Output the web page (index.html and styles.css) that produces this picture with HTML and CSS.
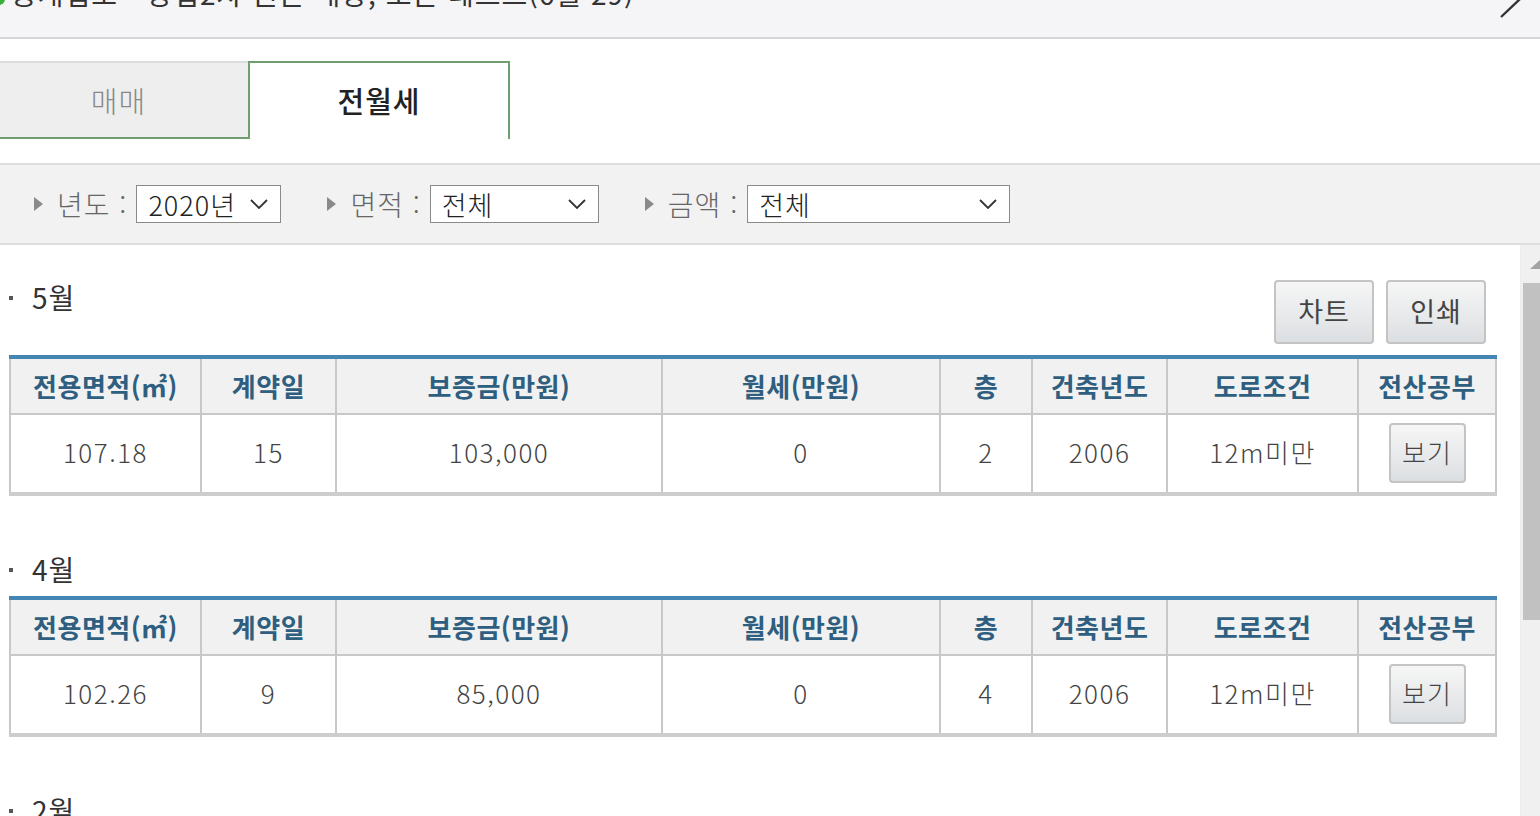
FILE: index.html
```html
<!DOCTYPE html>
<html lang="ko">
<head>
<meta charset="utf-8">
<title>실거래가</title>
<link rel="stylesheet" href="styles.css">
</head>
<body>
<div class="page">
  <header class="titlebar">
    <span class="title-dot"></span>
    <h1 class="title">중개업소 - 상업2차 원본 매장, 오픈 테스트(6월 29)</h1>
    <svg class="close" width="30" height="18" viewBox="0 0 30 18"><line x1="1" y1="17" x2="20" y2="-1" stroke="#333" stroke-width="2.4"/></svg>
  </header>

  <nav class="tabs">
    <div class="tab">매매</div>
    <div class="tab tab-active">전월세</div>
  </nav>

  <div class="filters">
    <div class="filter">
      <span class="tri"></span>
      <span class="flabel">년도 :</span>
      <div class="select sel-year"><span>2020년</span><svg class="chev" width="18" height="10" viewBox="0 0 18 10"><polyline points="1,1 9,9 17,1" fill="none" stroke="#333" stroke-width="1.8"/></svg></div>
    </div>
    <div class="filter">
      <span class="tri"></span>
      <span class="flabel">면적 :</span>
      <div class="select sel-area"><span>전체</span><svg class="chev" width="18" height="10" viewBox="0 0 18 10"><polyline points="1,1 9,9 17,1" fill="none" stroke="#333" stroke-width="1.8"/></svg></div>
    </div>
    <div class="filter">
      <span class="tri"></span>
      <span class="flabel">금액 :</span>
      <div class="select sel-price"><span>전체</span><svg class="chev" width="18" height="10" viewBox="0 0 18 10"><polyline points="1,1 9,9 17,1" fill="none" stroke="#333" stroke-width="1.8"/></svg></div>
    </div>
  </div>

  <div class="main">
    <div class="content">
      <section class="month">
        <div class="month-head">
          <h2 class="month-title"><span class="bullet"></span>5월</h2>
          <div class="actions">
            <button class="btn btn-lg">차트</button>
            <button class="btn btn-lg">인쇄</button>
          </div>
        </div>
        <table class="deals">
          <colgroup>
            <col class="c1"><col class="c2"><col class="c3"><col class="c4"><col class="c5"><col class="c6"><col class="c7"><col class="c8">
          </colgroup>
          <thead>
            <tr><th>전용면적(㎡)</th><th>계약일</th><th>보증금(만원)</th><th>월세(만원)</th><th>층</th><th>건축년도</th><th>도로조건</th><th>전산공부</th></tr>
          </thead>
          <tbody>
            <tr><td>107.18</td><td>15</td><td>103,000</td><td>0</td><td>2</td><td>2006</td><td>12m미만</td><td><button class="btn btn-sm">보기</button></td></tr>
          </tbody>
        </table>
      </section>

      <section class="month">
        <div class="month-head">
          <h2 class="month-title"><span class="bullet"></span>4월</h2>
        </div>
        <table class="deals">
          <colgroup>
            <col class="c1"><col class="c2"><col class="c3"><col class="c4"><col class="c5"><col class="c6"><col class="c7"><col class="c8">
          </colgroup>
          <thead>
            <tr><th>전용면적(㎡)</th><th>계약일</th><th>보증금(만원)</th><th>월세(만원)</th><th>층</th><th>건축년도</th><th>도로조건</th><th>전산공부</th></tr>
          </thead>
          <tbody>
            <tr><td>102.26</td><td>9</td><td>85,000</td><td>0</td><td>4</td><td>2006</td><td>12m미만</td><td><button class="btn btn-sm">보기</button></td></tr>
          </tbody>
        </table>
      </section>

      <section class="month">
        <div class="month-head">
          <h2 class="month-title"><span class="bullet"></span>2월</h2>
        </div>
      </section>
    </div>
    <div class="scrollbar">
      <span class="sb-arrow"></span>
      <span class="sb-thumb"></span>
    </div>
  </div>
</div>
</body>
</html>
```

FILE: styles.css
```css
* { box-sizing: border-box; }
html, body {
  margin: 0;
  padding: 0;
  width: 1540px;
  height: 816px;
  overflow: hidden;
  background: #fff;
  font-family: "Noto Sans CJK KR", "Noto Sans", sans-serif;
  color: #333;
}
.page {
  display: flex;
  flex-direction: column;
  height: 816px;
}

/* title bar */
.titlebar {
  position: relative;
  height: 39px;
  flex: none;
  background: #f5f5f7;
  border-bottom: 2px solid #d6d6d6;
  display: flex;
  align-items: flex-start;
  overflow: hidden;
}
.title-dot {
  flex: none;
  width: 12px;
  height: 12px;
  border-radius: 50%;
  background: #3cae3c;
  margin: -7px 0 0 -7px;
}
.title {
  margin: -21px 0 0 6px;
  font-size: 28px;
  line-height: 28px;
  font-weight: 400;
  color: #333;
  white-space: nowrap;
  letter-spacing: 1px;
}
.close {
  position: absolute;
  right: 10px;
  top: 0;
}

/* tabs */
.tabs {
  flex: none;
  display: flex;
  margin-top: 22px;
  height: 78px;
}
.tab {
  width: 248px;
  display: flex;
  align-items: center;
  justify-content: center;
  font-size: 29px;
  font-weight: 300;
  letter-spacing: 1px;
  color: #888;
  background: #eeeeee;
  border-top: 2px solid #dcdcdc;
  border-bottom: 2px solid #6f9f6f;
  padding: 0 11px 0 0;
}
.tab-active {
  width: 262px;
  background: #fff;
  color: #222;
  font-weight: 500;
  border: 2px solid #6f9f6f;
  border-bottom: none;
  padding: 0 0 2px 0;
}

/* filters */
.filters {
  flex: none;
  margin-top: 24px;
  height: 82px;
  background: #f2f2f2;
  border-top: 2px solid #dedede;
  border-bottom: 2px solid #dedede;
  display: flex;
  align-items: center;
  padding-left: 34px;
  gap: 46px;
}
.filter {
  display: flex;
  align-items: center;
}
.tri {
  width: 0;
  height: 0;
  border-top: 7px solid transparent;
  border-bottom: 7px solid transparent;
  border-left: 9px solid #8a8a8a;
  margin-right: 14px;
}
.flabel {
  font-size: 28px;
  font-weight: 300;
  letter-spacing: 1px;
  color: #666;
  margin-right: 9px;
  line-height: 38px;
}
.select {
  height: 38px;
  background: #fff;
  border: 1px solid #8a8a8a;
  display: flex;
  align-items: center;
  justify-content: space-between;
  padding: 0 12px 0 11px;
  font-size: 27px;
  font-weight: 300;
  letter-spacing: 1px;
  color: #222;
}
.sel-year { width: 145px; }
.sel-area { width: 169px; }
.sel-price { width: 263px; }

/* main */
.main {
  flex: 1;
  display: flex;
  min-height: 0;
}
.content {
  flex: 1;
  padding: 32px 23px 0 9px;
}
.scrollbar {
  flex: none;
  width: 22px;
  background: #f0f0f0;
  border-left: 1px solid #ececec;
  display: flex;
  flex-direction: column;
  align-items: flex-end;
}
.sb-arrow {
  margin-top: 14px;
  width: 0;
  height: 0;
  border-left: 11px solid transparent;
  border-right: 11px solid transparent;
  border-bottom: 10px solid #a3a3a3;
  margin-right: -10px;
}
.sb-thumb {
  margin-top: 14px;
  width: 19px;
  height: 337px;
  background: #c1c1c1;
}

.month { margin-bottom: 53px; }
.month-head {
  display: flex;
  justify-content: space-between;
  align-items: flex-start;
}
.month-title {
  margin: 0;
  display: flex;
  align-items: center;
  font-size: 28px;
  line-height: 40px;
  font-weight: 400;
  letter-spacing: 1px;
  color: #333;
}
.bullet {
  width: 4px;
  height: 4px;
  background: #555;
  margin-right: 19px;
  margin-top: 2px;
}
.actions {
  display: flex;
  gap: 12px;
  margin: 3px 11px 4px 0;
}
.btn {
  font-family: "Noto Sans CJK KR", "Noto Sans", sans-serif;
  color: #444;
  background: linear-gradient(#f6f6f6, #dcdfe2);
  border: 2px solid #c4c4c4;
  border-radius: 4px;
  padding: 0;
  cursor: pointer;
}
.btn-lg {
  width: 100px;
  height: 64px;
  font-size: 27px;
  letter-spacing: 1px;
  padding-bottom: 4px;
}
.btn-sm {
  width: 77px;
  height: 60px;
  font-size: 26px;
  font-weight: 300;
  letter-spacing: 1px;
  color: #444;
  display: block;
  margin: 0 auto;
  padding-bottom: 2px;
}

.deals {
  margin-top: 7px;
  width: 1486px;
  table-layout: fixed;
  border-collapse: collapse;
  border-top: 4px solid #4485b3;
  border-bottom: 4px solid #cdcdcd;
}
.c1 { width: 191px; }
.c2 { width: 135px; }
.c3 { width: 326px; }
.c4 { width: 278px; }
.c5 { width: 92px; }
.c6 { width: 135px; }
.c7 { width: 191px; }
.c8 { width: 138px; }
.deals th, .deals td {
  border: 2px solid #c8c8c8;
  text-align: center;
  padding: 0;
}
.deals th {
  border-top: none;
  height: 57px;
  background: #f1f1f1;
  font-size: 26px;
  font-weight: 700;
  letter-spacing: 0.5px;
  color: #2f5f80;
  padding-bottom: 2px;
}
.deals td {
  height: 80px;
  font-size: 26px;
  font-weight: 300;
  letter-spacing: 1.5px;
  color: #444;
  border-bottom: none;
  padding-bottom: 5px;
}
.deals td .btn-sm { margin-top: 3px; }
```
